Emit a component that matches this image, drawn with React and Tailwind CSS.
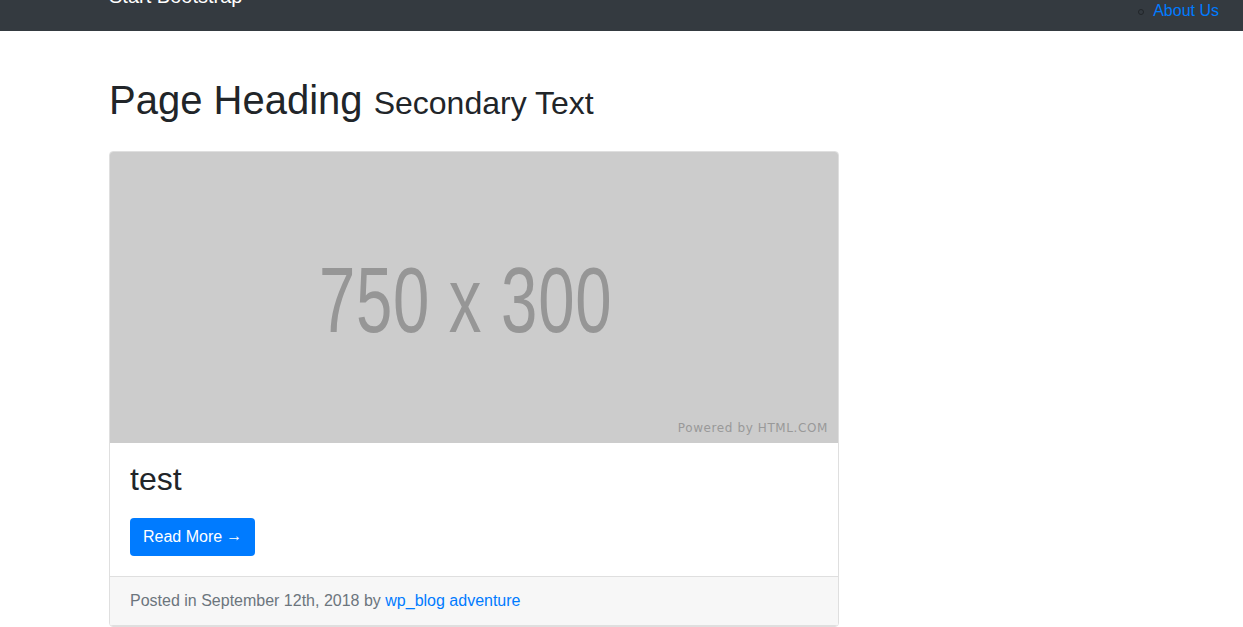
// App.jsx
import React from 'react';

const sans = { fontFamily: '"Liberation Sans", Arial, sans-serif' };

export default function App() {
  return (
    <div className="w-full h-[627px] overflow-hidden bg-white text-[#212529]" style={sans}>
      {/* Navbar */}
      <nav className="h-[31px] bg-[#343a40] overflow-hidden">
        <div className="flex items-start justify-between pl-[109px] pr-[24px]">
          <a className="text-[20px] leading-[30px] mt-[-19px] text-white">Start Bootstrap</a>
          <ul className="flex items-center mt-[-1px]">
            <li className="flex items-center text-[16px] leading-[24px]">
              <span className="w-[6px] h-[6px] rounded-full border border-[#212529] mr-[9px] mt-[1px]" />
              <a className="text-[#007bff]">About Us</a>
            </li>
          </ul>
        </div>
      </nav>

      {/* Content */}
      <div className="pl-[109px]">
        <h1 className="mt-[45px] text-[40px] leading-[48px] font-normal">
          Page Heading <small className="text-[32px]">Secondary Text</small>
        </h1>

        {/* Blog post card */}
        <div className="mt-[24px] w-[730px] border border-[#dfdfdf] rounded-[4px] overflow-hidden">
          <div className="relative h-[291px] bg-[#cccccc] flex items-center justify-center">
            <span className="inline-block text-[92px] leading-none text-[#969696] scale-x-71 mt-[4px] mr-[16px] tracking-[1px]">
              750 x 300
            </span>
            <span
              className="absolute right-[10px] bottom-[6px] text-[12px] tracking-[0.6px] text-[#999999]"
              style={{ fontFamily: '"DejaVu Sans", sans-serif' }}
            >
              Powered by HTML.COM
            </span>
          </div>

          <div className="px-[20px] pt-[17px] pb-[20px]">
            <h2 className="text-[32px] leading-[38px] mb-[20px]">test</h2>
            <a className="inline-flex items-center h-[38px] px-[13px] rounded-[4px] bg-[#007bff] text-white text-[16px]">
              Read More <span className="relative -top-px ml-[4px]">&rarr;</span>
            </a>
          </div>

          <div className="bg-[#f7f7f7] border-t border-b border-[#dfdfdf] px-[20px] py-[12px] text-[16px] leading-[24px] text-[#6c757d]">
            Posted in September 12th, 2018 by <a className="text-[#007bff]">wp_blog adventure</a>
          </div>
        </div>
      </div>
    </div>
  );
}
